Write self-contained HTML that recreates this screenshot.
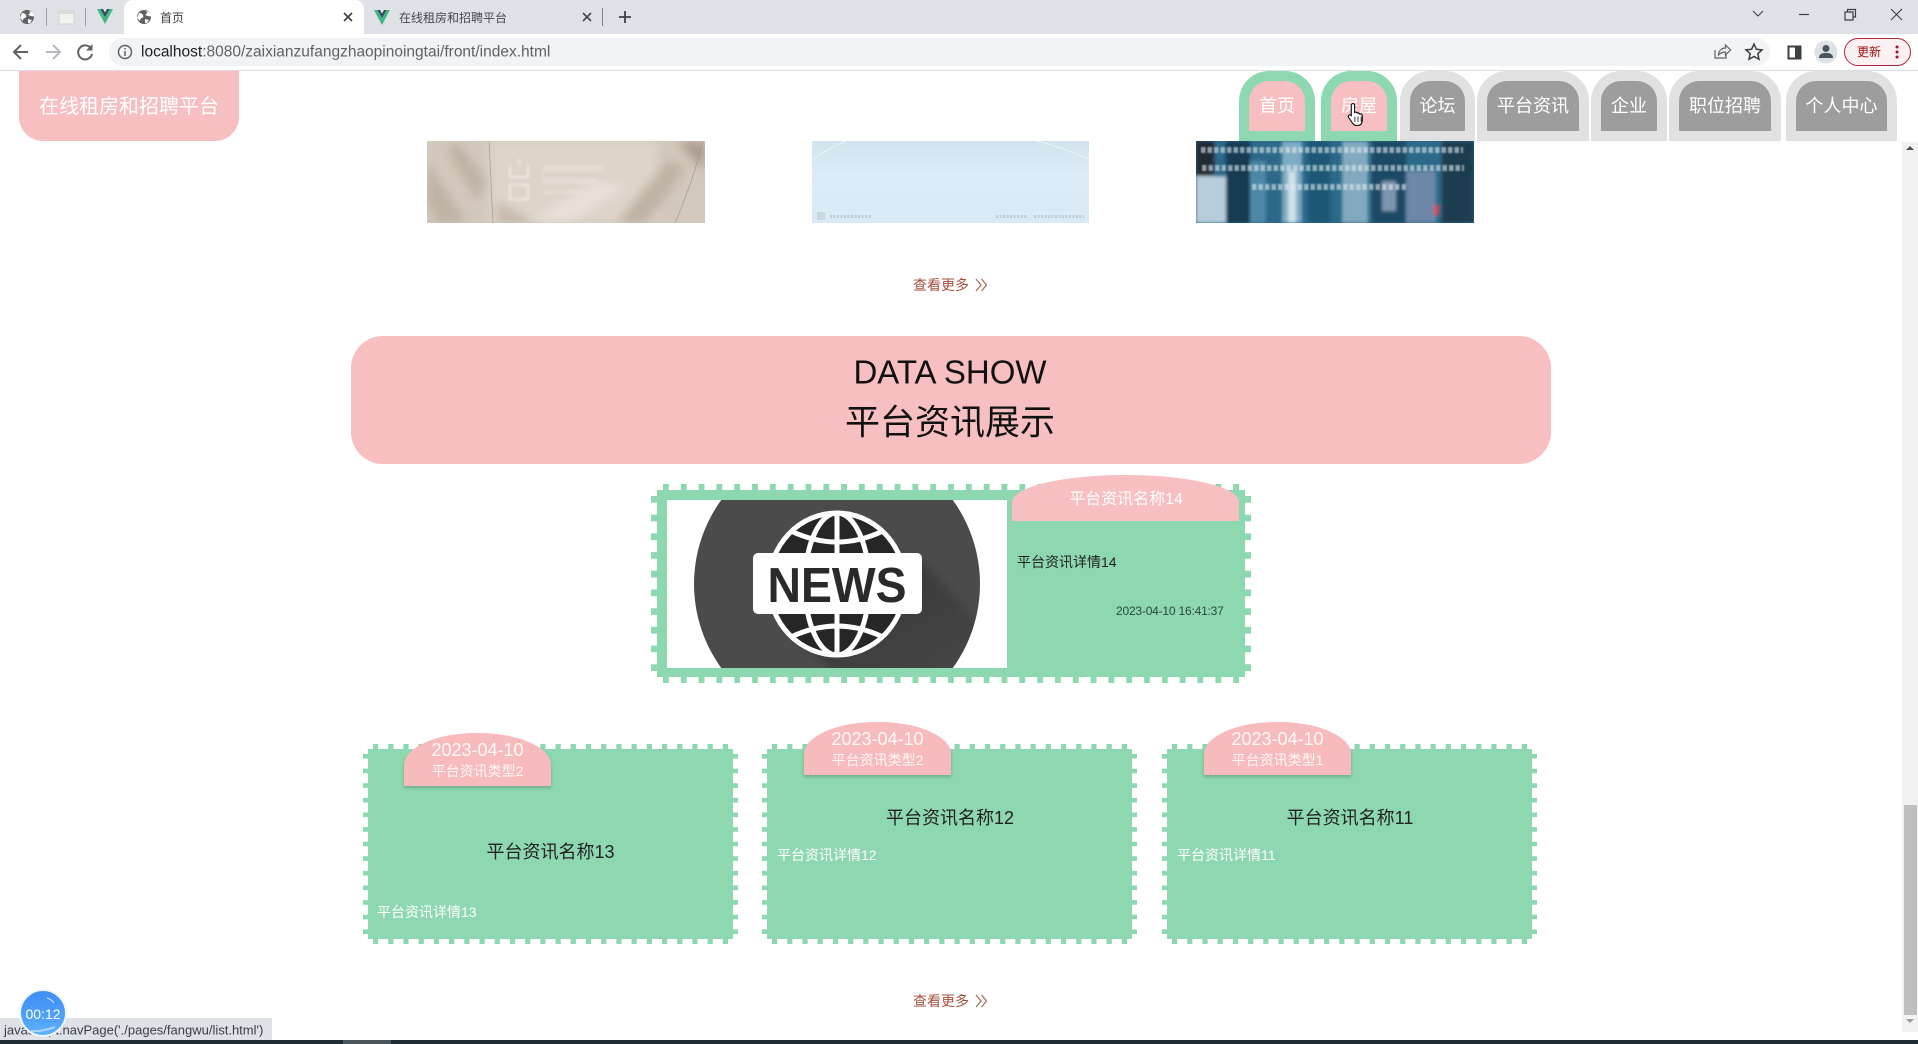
<!DOCTYPE html>
<html lang="zh"><head><meta charset="utf-8"><title>首页</title>
<style>
*{box-sizing:border-box;margin:0;padding:0}
html,body{width:1918px;height:1044px;overflow:hidden;background:#fff}
body{position:relative;font-family:"Liberation Sans","Noto Sans CJK SC",sans-serif;color:#222}
.a{position:absolute}
.t{position:absolute;white-space:nowrap;line-height:1}
.c{transform:translate(-50%,-50%)}
.m{transform:translateY(-50%)}
.out{position:absolute;top:71px;height:70px;background:#e1e1e1;border-radius:30px 30px 0 0}
.out.on{background:#8dd7b1}
.in{position:absolute;top:10px;left:10px;right:10px;height:50px;background:#9d9d9d;border-radius:20px 20px 0 0;color:#fff;font-size:18px;line-height:50px;text-align:center;white-space:nowrap}
.on .in{background:#f7bfc1}
.card{position:absolute;top:744px;width:375px;height:200px;background:#8dd7b1;border:5px dashed #fff}
.badge{position:absolute;width:147px;height:53px;background:#f7bbbd;border-radius:73px 73px 0 0/32px 32px 0 0;box-shadow:0 2px 3px rgba(0,0,0,.2);color:#fff}
.badge div{position:absolute;left:0;right:0;text-align:center;line-height:1;white-space:nowrap}
.badge .d{font-size:18px;top:8px;opacity:.92}
.badge .s{font-size:14px;top:31px;opacity:.9}
.more{position:absolute;left:913px;font-size:14px;line-height:1;color:#a5503e;white-space:nowrap}
</style></head><body>

<!-- browser chrome -->
<div class="a" style="left:0;top:0;width:1918px;height:34px;background:#dee1e6"></div>
<div class="a" style="left:124px;top:0;width:240px;height:34px;background:#fff;border-radius:9px 9px 0 0"></div>
<div class="a" style="left:0;top:34px;width:1918px;height:36px;background:#fff"></div>
<div class="a" style="left:0;top:70px;width:1918px;height:1px;background:#dadce0"></div>

<svg class="a" style="left:0;top:0" width="660" height="34" viewBox="0 0 660 34">
<defs><g id="gl"><circle r="7" fill="#5f6368"/><path d="M-5 -4q3 0 4 2t-1 3q-2 0-2 3l-3-3zM2-6q2 2 0 3t2 2 3-1q-1-3-5-4zM1 2l4 1-2 3h-2z" fill="#fff"/></g>
<g id="vu"><path d="M-8-7L0 8 8-7H4.6L0 1-4.6-7z" fill="#41b883"/><path d="M-4.6-7L0 1 4.6-7H2L0-3.4-2-7z" fill="#35495e"/></g></defs>
<use href="#gl" x="27" y="17"/><rect x="46" y="8" width="1" height="18" fill="#9aa0a6"/>
<rect x="59" y="11" width="15" height="13" fill="#f1f3f1" stroke="#cfd4d0"/><rect x="59" y="11" width="15" height="3" fill="#d8dcd8"/>
<rect x="85" y="8" width="1" height="18" fill="#9aa0a6"/>
<use href="#vu" x="105" y="16"/>
<use href="#gl" x="144" y="17"/>
<path d="M344 13l8 8M352 13l-8 8" stroke="#3c4043" stroke-width="1.6"/>
<use href="#vu" x="382" y="17"/>
<path d="M583 13l8 8M591 13l-8 8" stroke="#45494e" stroke-width="1.6"/>
<rect x="602" y="8" width="1" height="18" fill="#7f8388"/>
<path d="M625 11v12M619 17h12" stroke="#3c4043" stroke-width="1.8"/>
</svg>
<div class="t m" style="left:160px;top:18px;font-size:12px;color:#3c4043">首页</div>
<div class="t m" style="left:399px;top:18px;font-size:12px;color:#45494e">在线租房和招聘平台</div>

<div class="a" style="left:109px;top:38px;width:1661px;height:28px;background:#f1f3f4;border-radius:14px"></div>
<svg class="a" style="left:0;top:34px" width="140" height="36" viewBox="0 0 140 36">
<path d="M28 18H15M21 11l-7 7 7 7" fill="none" stroke="#5f6368" stroke-width="2"/>
<path d="M46 18H59M53 11l7 7-7 7" fill="none" stroke="#b4b7bb" stroke-width="2"/>
<path d="M91 14.5A7 7 0 1 0 92 20" fill="none" stroke="#5f6368" stroke-width="2"/><path d="M92.500 10v6.500H86z" fill="#5f6368"/>
<circle cx="125" cy="18" r="6.500" fill="none" stroke="#5f6368" stroke-width="1.500"/><path d="M125 17v5M125 14v1.500" stroke="#5f6368" stroke-width="1.500"/>
</svg>
<div class="t m" style="left:141px;top:52px;font-size:15.500px;color:#5f6368"><span style="color:#202124">localhost</span>:8080/zaixianzufangzhaopinoingtai/front/index.html</div>

<svg class="a" style="left:1700px;top:0" width="218" height="70" viewBox="0 0 218 70">
<path d="M53 11l5 5 5-5" fill="none" stroke="#3c4043"/>
<path d="M99 14.500h10" stroke="#3c4043" stroke-width="1.200"/>
<path d="M145 12h8v8h-8zM147.500 12V9.500h8V17H153" fill="none" stroke="#3c4043" stroke-width="1.200"/>
<path d="M191 9l11 11M202 9L191 20" stroke="#3c4043" stroke-width="1.100"/>
<path d="M15 50v8h11v-3" fill="none" stroke="#5f6368" stroke-width="1.200"/><path d="M18.500 55c0-4 3-7 7-7v-3l5 5-5 5v-3c-3 0-5 1-7 3z" fill="none" stroke="#5f6368" stroke-width="1.200"/>
<path d="M54 44l2.400 5.300 5.600.6-4.200 3.800 1.200 5.600L54 56.500l-5 2.800 1.200-5.600L46 49.900l5.600-.6z" fill="none" stroke="#3c4043" stroke-width="1.500"/>
<rect x="88.500" y="46.500" width="12" height="12" fill="#fff" stroke="#3c4043" stroke-width="2"/><rect x="95" y="46" width="6" height="13" fill="#3c4043"/>
<circle cx="126" cy="52" r="11.500" fill="#dee1e6"/><circle cx="126" cy="48.500" r="3.500" fill="#4a5360"/><path d="M119 58c0-4 3-5 7-5s7 1 7 5z" fill="#4a5360"/>
</svg>
<div class="a" style="left:1844px;top:38px;width:67px;height:28px;border:1px solid #b3263a;border-radius:14px;background:#fbf1f2"></div>
<div class="t m" style="left:1857px;top:52px;font-size:12px;color:#a50e0e">更新</div>
<svg class="a" style="left:1894px;top:44px" width="6" height="16"><circle cx="3" cy="3" r="1.500" fill="#a50e2c"/><circle cx="3" cy="8" r="1.500" fill="#a50e2c"/><circle cx="3" cy="13" r="1.500" fill="#a50e2c"/></svg>

<!-- thumbnails -->
<svg class="a" style="left:427px;top:141px" width="278" height="82" viewBox="0 0 278 82">
<defs><filter id="b1" x="-10%" y="-10%" width="120%" height="120%"><feGaussianBlur stdDeviation="5"/></filter><filter id="b0"><feGaussianBlur stdDeviation="1"/></filter></defs>
<rect width="278" height="82" fill="#d3c8bd"/>
<g filter="url(#b1)"><rect x="62" width="168" height="82" fill="#ddd4ca"/>
<path d="M0 20L40 82H10L0 60zM30 0L60 40 50 60 20 10zM190 82L240 20l20 6-40 56z" fill="#bfb2a5"/><path d="M100 82L170 40l30 6-60 36z" fill="#e8e1d8"/>
<path d="M250 0h28v30z" fill="#a99a8c"/><path d="M70 60l40 22H70z" fill="#c6b9ac"/></g>
<path d="M62 0l4 82M276 0q-10 40-28 82" stroke="#a0958a" stroke-width=".8" fill="none" opacity=".8"/>
<g filter="url(#b0)"><g fill="none" stroke="#ece6de" stroke-width="2.500"><path d="M83 24v12h18V24M92 18v6M83 44h18v14H83z"/></g>
<g fill="#e9e2d9" opacity=".7"><rect x="116" y="24" width="60" height="7"/><rect x="116" y="37" width="54" height="6"/><rect x="116" y="49" width="40" height="4"/></g></g>
</svg>
<svg class="a" style="left:812px;top:141px" width="277" height="82" viewBox="0 0 277 82">
<defs><linearGradient id="g2" x1="0" y1="0" x2="0" y2="1"><stop offset="0" stop-color="#d2e3ed"/><stop offset=".4" stop-color="#dcebf5"/><stop offset="1" stop-color="#daeaf4"/></linearGradient></defs>
<rect width="277" height="82" fill="url(#g2)"/>
<path d="M0 18Q20 6 34 0M277 18Q250 6 225 0" fill="none" stroke="#e9f2f7" stroke-width="1"/>
<rect x="5" y="71" width="8" height="8" fill="#c3d2da" opacity=".8"/>
<path d="M18 75.500h42M184 75.500h32M222 75.500h50" stroke="#b3c3cc" stroke-width="3" stroke-dasharray="2 1.500" opacity=".7"/>
</svg>
<svg class="a" style="left:1196px;top:141px" width="278" height="82" viewBox="0 0 278 82">
<defs><filter id="b3" x="-5%" y="-5%" width="110%" height="110%"><feGaussianBlur stdDeviation="1.500"/></filter><filter id="b4" x="-5%" y="-50%" width="110%" height="200%"><feGaussianBlur stdDeviation=".7"/></filter></defs>
<rect width="278" height="82" fill="#2c6888"/>
<g filter="url(#b3)">
<rect width="18" height="82" fill="#222b36"/><rect x="0" y="35" width="30" height="47" fill="#b8cddc"/>
<rect x="30" width="24" height="82" fill="#173a52"/><rect x="54" y="20" width="16" height="62" fill="#4f88a6"/><rect x="86" y="0" width="20" height="82" fill="#7fabc4"/><rect x="112" width="22" height="82" fill="#1f5875"/><rect x="92" y="30" width="8" height="52" fill="#cfe0ea"/>
<rect x="146" width="26" height="82" fill="#a7c5d6" opacity=".7"/><rect x="176" width="34" height="82" fill="#1e4a66"/><rect x="186" y="40" width="14" height="30" fill="#7e95b0"/><rect x="210" y="30" width="30" height="52" fill="#6d87a8"/><rect x="246" width="32" height="82" fill="#1b3c4f"/>
<rect x="238" y="64" width="5" height="10" fill="#d8475a"/>
</g>
<path d="M5 9h262M6 27h262M56 46h156" stroke="#dfe9f0" stroke-width="6" stroke-dasharray="4.500 2" opacity=".6" fill="none" filter="url(#b4)"/>
</svg>

<div class="more" style="top:278px">查看更多</div>
<svg class="a" style="left:975px;top:278px" width="13" height="14"><path d="M1 1l5 6-5 6M6.500 1l5 6-5 6" fill="none" stroke="#a5705f" stroke-width="1.300"/></svg>

<!-- header -->
<div class="a" style="left:19px;top:71px;width:220px;height:70px;background:#f7bfc1;border-radius:0 0 24px 24px"></div>
<div class="t c" style="left:129px;top:107px;font-size:20px;color:#fff">在线租房和招聘平台</div>
<div class="out on" style="left:1239px;width:76px"><div class="in">首页</div></div>
<div class="out on" style="left:1321px;width:76px"><div class="in">房屋</div></div>
<div class="out" style="left:1400px;width:75px"><div class="in">论坛</div></div>
<div class="out" style="left:1477px;width:112px"><div class="in">平台资讯</div></div>
<div class="out" style="left:1591px;width:76px"><div class="in">企业</div></div>
<div class="out" style="left:1669px;width:112px"><div class="in">职位招聘</div></div>
<div class="out" style="left:1786px;width:111px"><div class="in">个人中心</div></div>

<!-- section title -->
<div class="a" style="left:351px;top:336px;width:1200px;height:128px;background:#f7bfc1;border-radius:32px"></div>
<div class="t c" style="left:950px;top:372px;font-size:33px;color:#111">DATA SHOW</div>
<div class="t c" style="left:950px;top:423px;font-size:35px;color:#111">平台资讯展示</div>

<!-- feature card -->
<div class="a" style="left:651px;top:484px;width:600px;height:199px;background:#8dd7b1;border:6px dashed #fff"></div>
<svg class="a" style="left:667px;top:500px" width="340" height="168" viewBox="0 0 340 168">
<defs><clipPath id="cc"><circle cx="170" cy="84" r="143"/></clipPath>
<filter id="sb" x="-20%" y="-20%" width="140%" height="140%"><feGaussianBlur stdDeviation="5"/></filter>
<linearGradient id="sh" x1="0" y1="0" x2="1" y2="1"><stop offset="0" stop-color="#000" stop-opacity=".32"/><stop offset="1" stop-color="#000" stop-opacity=".03"/></linearGradient></defs>
<rect width="340" height="168" fill="#fff"/>
<circle cx="170" cy="84" r="143" fill="#4b4b4b"/>
<g clip-path="url(#cc)"><path d="M255 62L335 150V178H170L120 120z" fill="url(#sh)" filter="url(#sb)"/></g>
<ellipse cx="170" cy="84" rx="68" ry="71" fill="#262626" stroke="#fff" stroke-width="5"/>
<ellipse cx="170" cy="84" rx="32" ry="71" fill="none" stroke="#fff" stroke-width="5"/>
<path d="M170 13v142" stroke="#fff" stroke-width="5"/>
<path d="M124 31Q170 53 216 31M124 137Q170 115 216 137" fill="none" stroke="#fff" stroke-width="5"/>
<rect x="86" y="53" width="169" height="61" rx="5" fill="#fff"/>
<text x="170" y="102" text-anchor="middle" font-family="Liberation Sans" font-weight="700" font-size="49" textLength="139" lengthAdjust="spacingAndGlyphs" fill="#2a2a2a">NEWS</text>
</svg>
<div class="a" style="left:1012px;top:475px;width:227px;height:46px;background:#f7bfc1;border-radius:113px 113px 0 0/27px 27px 0 0"></div>
<div class="t c" style="left:1126px;top:500px;font-size:16px;color:#fff">平台资讯名称14</div>
<div class="t m" style="left:1017px;top:562px;font-size:14px;color:#222">平台资讯详情14</div>
<div class="t m" style="left:1116px;top:611px;font-size:12px;color:#2b4a3c;letter-spacing:-.2px">2023-04-10 16:41:37</div>

<!-- bottom cards -->
<div class="card" style="left:363px"></div>
<div class="card" style="left:762px"></div>
<div class="card" style="left:1162px"></div>
<div class="badge" style="left:404px;top:733px"><div class="d">2023-04-10</div><div class="s">平台资讯类型2</div></div>
<div class="badge" style="left:804px;top:722px"><div class="d">2023-04-10</div><div class="s">平台资讯类型2</div></div>
<div class="badge" style="left:1204px;top:722px"><div class="d">2023-04-10</div><div class="s">平台资讯类型1</div></div>
<div class="t c" style="left:550.500px;top:852px;font-size:18px;color:#222">平台资讯名称13</div>
<div class="t c" style="left:950px;top:818px;font-size:18px;color:#222">平台资讯名称12</div>
<div class="t c" style="left:1350px;top:818px;font-size:18px;color:#222">平台资讯名称11</div>
<div class="t m" style="left:377px;top:912px;font-size:14px;color:#fff">平台资讯详情13</div>
<div class="t m" style="left:777px;top:855px;font-size:14px;color:#fff">平台资讯详情12</div>
<div class="t m" style="left:1177px;top:855px;font-size:14px;color:#fff">平台资讯详情11</div>

<div class="more" style="top:994px">查看更多</div>
<svg class="a" style="left:975px;top:994px" width="13" height="14"><path d="M1 1l5 6-5 6M6.500 1l5 6-5 6" fill="none" stroke="#a5705f" stroke-width="1.300"/></svg>

<!-- scrollbar -->
<div class="a" style="left:1902px;top:142px;width:16px;height:890px;background:#f1f1f1"></div>
<div class="a" style="left:1904px;top:805px;width:13px;height:210px;background:#bfbfbf"></div>
<svg class="a" style="left:1905px;top:145px" width="10" height="6"><path d="M5 1L9 5H1z" fill="#505050"/></svg>
<svg class="a" style="left:1905px;top:1018px" width="10" height="6"><path d="M5 5L9 1H1z" fill="#9a9a9a"/></svg>

<!-- status bar -->
<div class="a" style="left:0;top:1018px;width:272px;height:22px;background:#dee1e6"></div>
<div class="t m" style="left:4px;top:1030px;font-size:13px;color:#3c4043">javascript:navPage('./pages/fangwu/list.html')</div>
<div class="a" style="left:0;top:1040px;width:1918px;height:4px;background:#1f2d33"></div>
<div class="a" style="left:343px;top:1040px;width:48px;height:4px;background:#4a555a"></div>
<div class="a" style="left:19px;top:989px;width:48px;height:48px;border-radius:50%;background:linear-gradient(180deg,#3f8cf5,#5cb0fd);border:2.500px solid #eef5fd"></div>
<svg class="a" style="left:19px;top:989px" width="48" height="48" viewBox="0 0 48 48"><path d="M28 9q4 1 7 5" fill="none" stroke="#cfe4fd" stroke-width="1"/><path d="M12 42q10 1 24-4" fill="none" stroke="#a9d6fe" stroke-width="2"/></svg>
<div class="t c" style="left:43px;top:1014px;font-size:14px;color:#fff">00:12</div>

<!-- cursor -->
<svg class="a" style="left:1347px;top:102px" width="20" height="26" viewBox="0 0 18 25"><path d="M5 1.500c1 0 1.700.8 1.700 1.800V10c.4-.3 1-.4 1.500-.2.500.2.800.5 1 .9.500-.3 1.100-.3 1.600 0 .4.200.6.500.8.900.6-.3 1.300-.2 1.800.2.500.4.700 1 .7 1.700v4c0 3-1.600 5-4 5H8c-1.400 0-2.300-.8-3-1.800L1 15c-.6-.9-.4-1.800.3-2.300.7-.5 1.600-.3 2.200.3V3.300C3.300 2.300 4 1.500 5 1.500z" fill="#fff" stroke="#111" stroke-width="1.100"/><path d="M7 14v5M10 14v5M13 14v5" stroke="#111" stroke-width=".8"/></svg>
</body></html>
